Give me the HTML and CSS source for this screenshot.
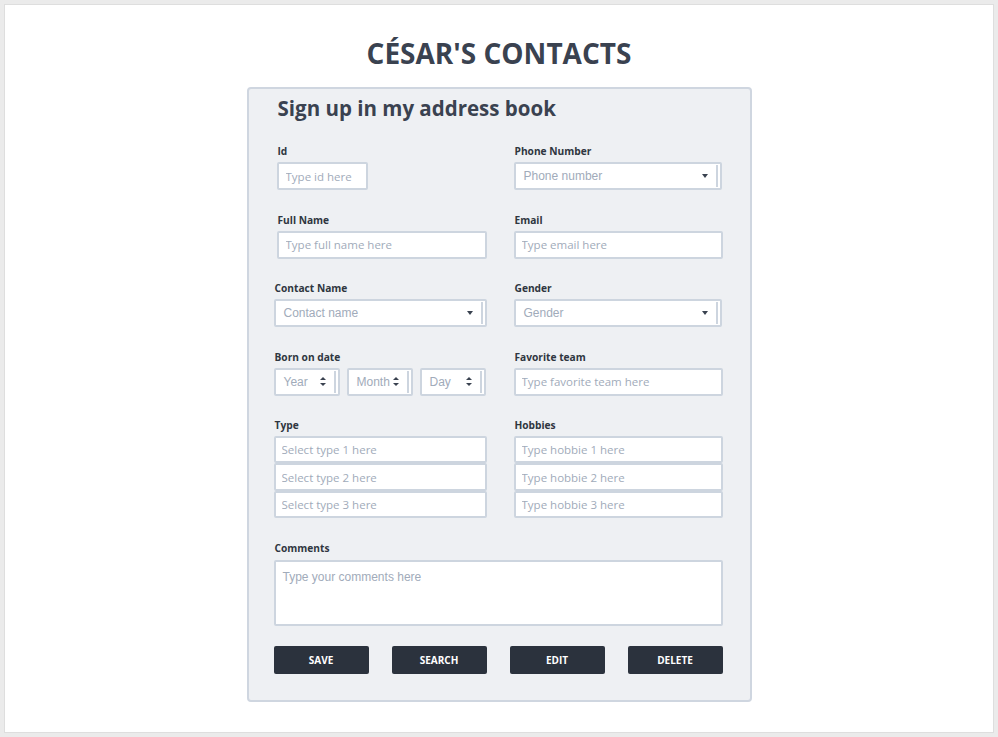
FILE: index.html
```html
<!DOCTYPE html>
<html lang="en">
<head>
<meta charset="utf-8">
<title>César's Contacts</title>
<link rel="stylesheet" href="styles.css">
</head>
<body>
<div class="page">
  <h1 class="title">CÉSAR'S CONTACTS</h1>
  <form class="panel">
    <h2 class="heading">Sign up in my address book</h2>
    <div class="grid">
      <div class="field shift">
        <label class="label">Id</label>
        <input class="input id-input" placeholder="Type id here">
      </div>
      <div class="field">
        <label class="label">Phone Number</label>
        <div class="select wide-r"><span class="ph-sel">Phone number</span><span class="caret"></span><span class="bar"></span></div>
      </div>

      <div class="field shift">
        <label class="label">Full Name</label>
        <input class="input pad7" placeholder="Type full name here">
      </div>
      <div class="field">
        <label class="label">Email</label>
        <input class="input" placeholder="Type email here">
      </div>

      <div class="field">
        <label class="label">Contact Name</label>
        <div class="select"><span class="ph-sel">Contact name</span><span class="caret"></span><span class="bar"></span></div>
      </div>
      <div class="field">
        <label class="label">Gender</label>
        <div class="select wide-r"><span class="ph-sel">Gender</span><span class="caret"></span><span class="bar"></span></div>
      </div>

      <div class="field">
        <label class="label">Born on date</label>
        <div class="dates">
          <div class="select small"><span class="ph-sel">Year</span><span class="updown"></span><span class="bar"></span></div>
          <div class="select small"><span class="ph-sel">Month</span><span class="updown"></span><span class="bar"></span></div>
          <div class="select small"><span class="ph-sel">Day</span><span class="updown"></span><span class="bar"></span></div>
        </div>
      </div>
      <div class="field">
        <label class="label">Favorite team</label>
        <input class="input" placeholder="Type favorite team here">
      </div>

      <div class="field">
        <label class="label">Type</label>
        <div class="stack">
          <input class="input stacked" placeholder="Select type 1 here">
          <input class="input stacked" placeholder="Select type 2 here">
          <input class="input stacked" placeholder="Select type 3 here">
        </div>
      </div>
      <div class="field">
        <label class="label">Hobbies</label>
        <div class="stack">
          <input class="input stacked" placeholder="Type hobbie 1 here">
          <input class="input stacked" placeholder="Type hobbie 2 here">
          <input class="input stacked" placeholder="Type hobbie 3 here">
        </div>
      </div>

      <div class="field full">
        <label class="label">Comments</label>
        <textarea class="textarea" placeholder="Type your comments here"></textarea>
      </div>
    </div>
    <div class="buttons">
      <button type="button" class="btn">SAVE</button>
      <button type="button" class="btn">SEARCH</button>
      <button type="button" class="btn">EDIT</button>
      <button type="button" class="btn">DELETE</button>
    </div>
  </form>
</div>
</body>
</html>
```
FILE: styles.css
```css
* { box-sizing: border-box; }
html, body { margin: 0; padding: 0; }
body {
  background: #ebebeb;
  padding: 4px;
  font-family: "Open Sans", "Liberation Sans", sans-serif;
  color: #3a4250;
}
.page {
  background: #fff;
  border: 1px solid #dedede;
  height: 729px;
  width: 990px;
  padding-top: 30px;
}
.title {
  margin: 0;
  text-align: center;
  font-size: 28px;
  line-height: 36px;
  font-weight: 700;
  color: #3a4250;
}
.panel {
  width: 505px;
  margin: 16px auto 0;
  background: #eef0f3;
  border: 2px solid #cfd6e0;
  border-radius: 4px;
  padding: 5px 27px 26px 25px;
}
.heading {
  margin: 0 0 23px 4px;
  font-size: 20.5px;
  line-height: 28px;
  font-weight: 700;
  color: #3a4250;
}
.grid {
  display: grid;
  grid-template-columns: 213px 209px;
  column-gap: 27px;
  row-gap: 23.5px;
}
.field { display: flex; flex-direction: column; }
.field.shift { padding-left: 3px; }
.field.full { grid-column: 1 / 3; margin-top: 0.5px; }
.label {
  font-size: 10.2px;
  line-height: 12px;
  font-weight: 700;
  color: #2f3640;
  margin-bottom: 5px;
  padding-left: 1px;
}
.input, .select, .textarea {
  background: #fff;
  border: 2px solid #cdd5df;
  border-radius: 2px;
  height: 28px;
  width: 100%;
}
.input {
  font-family: "Open Sans", sans-serif;
  font-size: 11.5px;
  color: #3a4250;
  padding: 0 6px;
  outline: none;
}
.input::placeholder { color: #a1abba; }
.input.pad7 { padding-left: 7px; }
.id-input { width: 91px; padding-left: 7px; }
.select {
  display: flex;
  align-items: center;
  padding: 0 0 0 8px;
}
.select.wide-r { width: 208px; }
.ph-sel {
  font-family: "Liberation Sans", Arial, sans-serif;
  font-size: 12px;
  color: #a1abba;
  flex: 1;
  min-width: 0;
  white-space: nowrap;
}
.caret {
  width: 0; height: 0;
  border-left: 3.5px solid transparent;
  border-right: 3.5px solid transparent;
  border-top: 4px solid #3a4250;
  margin-right: 8px;
}
.bar {
  width: 2px;
  height: 22px;
  background: #cdd5df;
  margin-right: 2px;
}
.dates { display: flex; gap: 7px; }
.select.small { width: 66px; }
.updown {
  width: 6px; height: 9px;
  flex: none;
  position: relative;
  margin-left: 4px;
  margin-right: 8px;
}
.updown::before, .updown::after {
  content: "";
  position: absolute;
  left: 0;
  border-left: 3px solid transparent;
  border-right: 3px solid transparent;
}
.updown::before { top: 0; border-bottom: 3.5px solid #3a4250; }
.updown::after { bottom: 0; border-top: 3.5px solid #3a4250; }
.stack { display: flex; flex-direction: column; }
.input.stacked { height: 27.4px; }
.textarea {
  height: 66px;
  resize: none;
  font-family: "Liberation Sans", Arial, sans-serif;
  font-size: 12px;
  padding: 8px 7px;
  outline: none;
  margin-top: 1px;
}
.textarea::placeholder { color: #a1abba; }
.buttons {
  display: flex;
  justify-content: space-between;
  margin-top: 20px;
}
.btn {
  width: 95px;
  height: 28px;
  background: #2b323d;
  border: none;
  border-radius: 2px;
  color: #fff;
  font-family: "Open Sans", sans-serif;
  font-weight: 700;
  font-size: 10px;
}
```
